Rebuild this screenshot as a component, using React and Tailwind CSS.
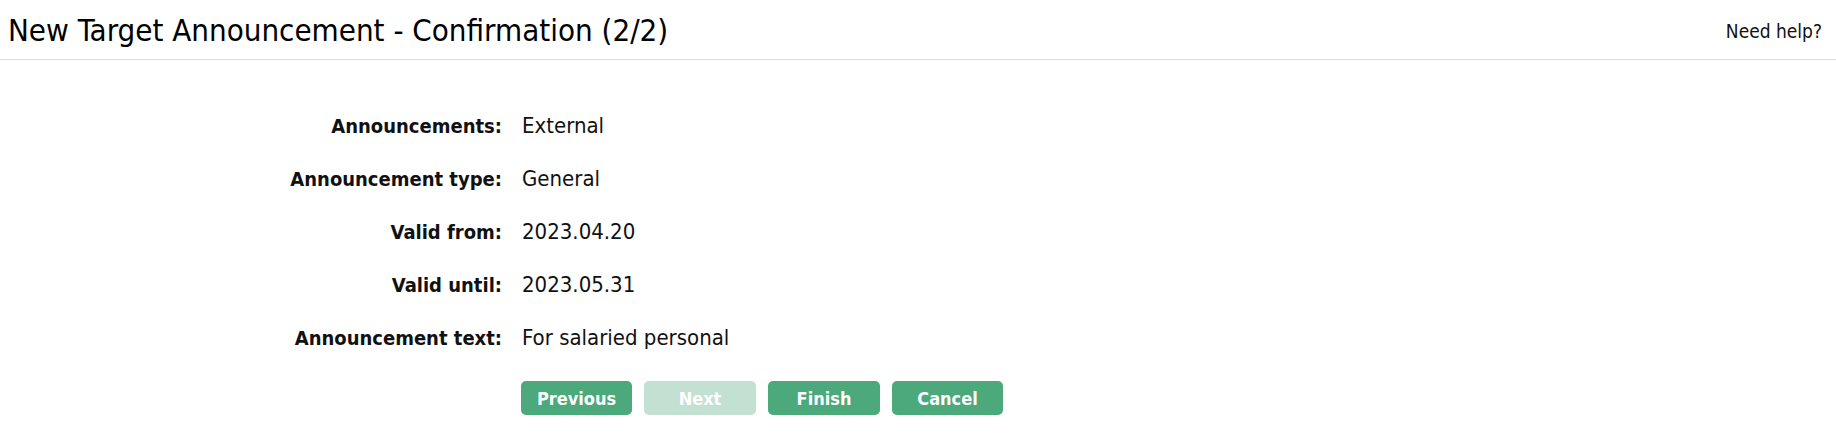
export default function App() {
  const rows = [
    ["Announcements:", "External"],
    ["Announcement type:", "General"],
    ["Valid from:", "2023.04.20"],
    ["Valid until:", "2023.05.31"],
    ["Announcement text:", "For salaried personal"],
  ];
  const font = { fontFamily: "'DejaVu Sans Condensed', 'Liberation Sans', sans-serif" };
  return (
    <div className="w-[1836px] h-[433px] bg-white text-[#111]" style={font}>
      <div className="h-[60px] border-b border-[#dddddd] flex items-center justify-between pl-[8px] pr-[14px]">
        <h1 className="text-[31px] leading-none text-black pt-[2px]">New Target Announcement - Confirmation (2/2)</h1>
        <span className="text-[19px] text-[#111] pt-[4px]">Need help?</span>
      </div>
      <div className="pt-[39px] flex flex-col">
        {rows.map(([l, v]) => (
          <div key={l} className="flex items-center h-[53px]">
            <div className="w-[502px] text-right font-bold text-[20px]">{l}</div>
            <div className="pl-[20px] text-[22px]">{v}</div>
          </div>
        ))}
        <div className="flex gap-[12px] pl-[521px] mt-[17px]">
          <button className="w-[111px] h-[34px] rounded-[5px] bg-[#4ba97b] text-white font-bold text-[18px]">Previous</button>
          <button className="w-[112px] h-[34px] rounded-[5px] bg-[#c3e1d3] text-white font-bold text-[18px]">Next</button>
          <button className="w-[112px] h-[34px] rounded-[5px] bg-[#4ba97b] text-white font-bold text-[18px]">Finish</button>
          <button className="w-[111px] h-[34px] rounded-[5px] bg-[#4ba97b] text-white font-bold text-[18px]">Cancel</button>
        </div>
      </div>
    </div>
  );
}
